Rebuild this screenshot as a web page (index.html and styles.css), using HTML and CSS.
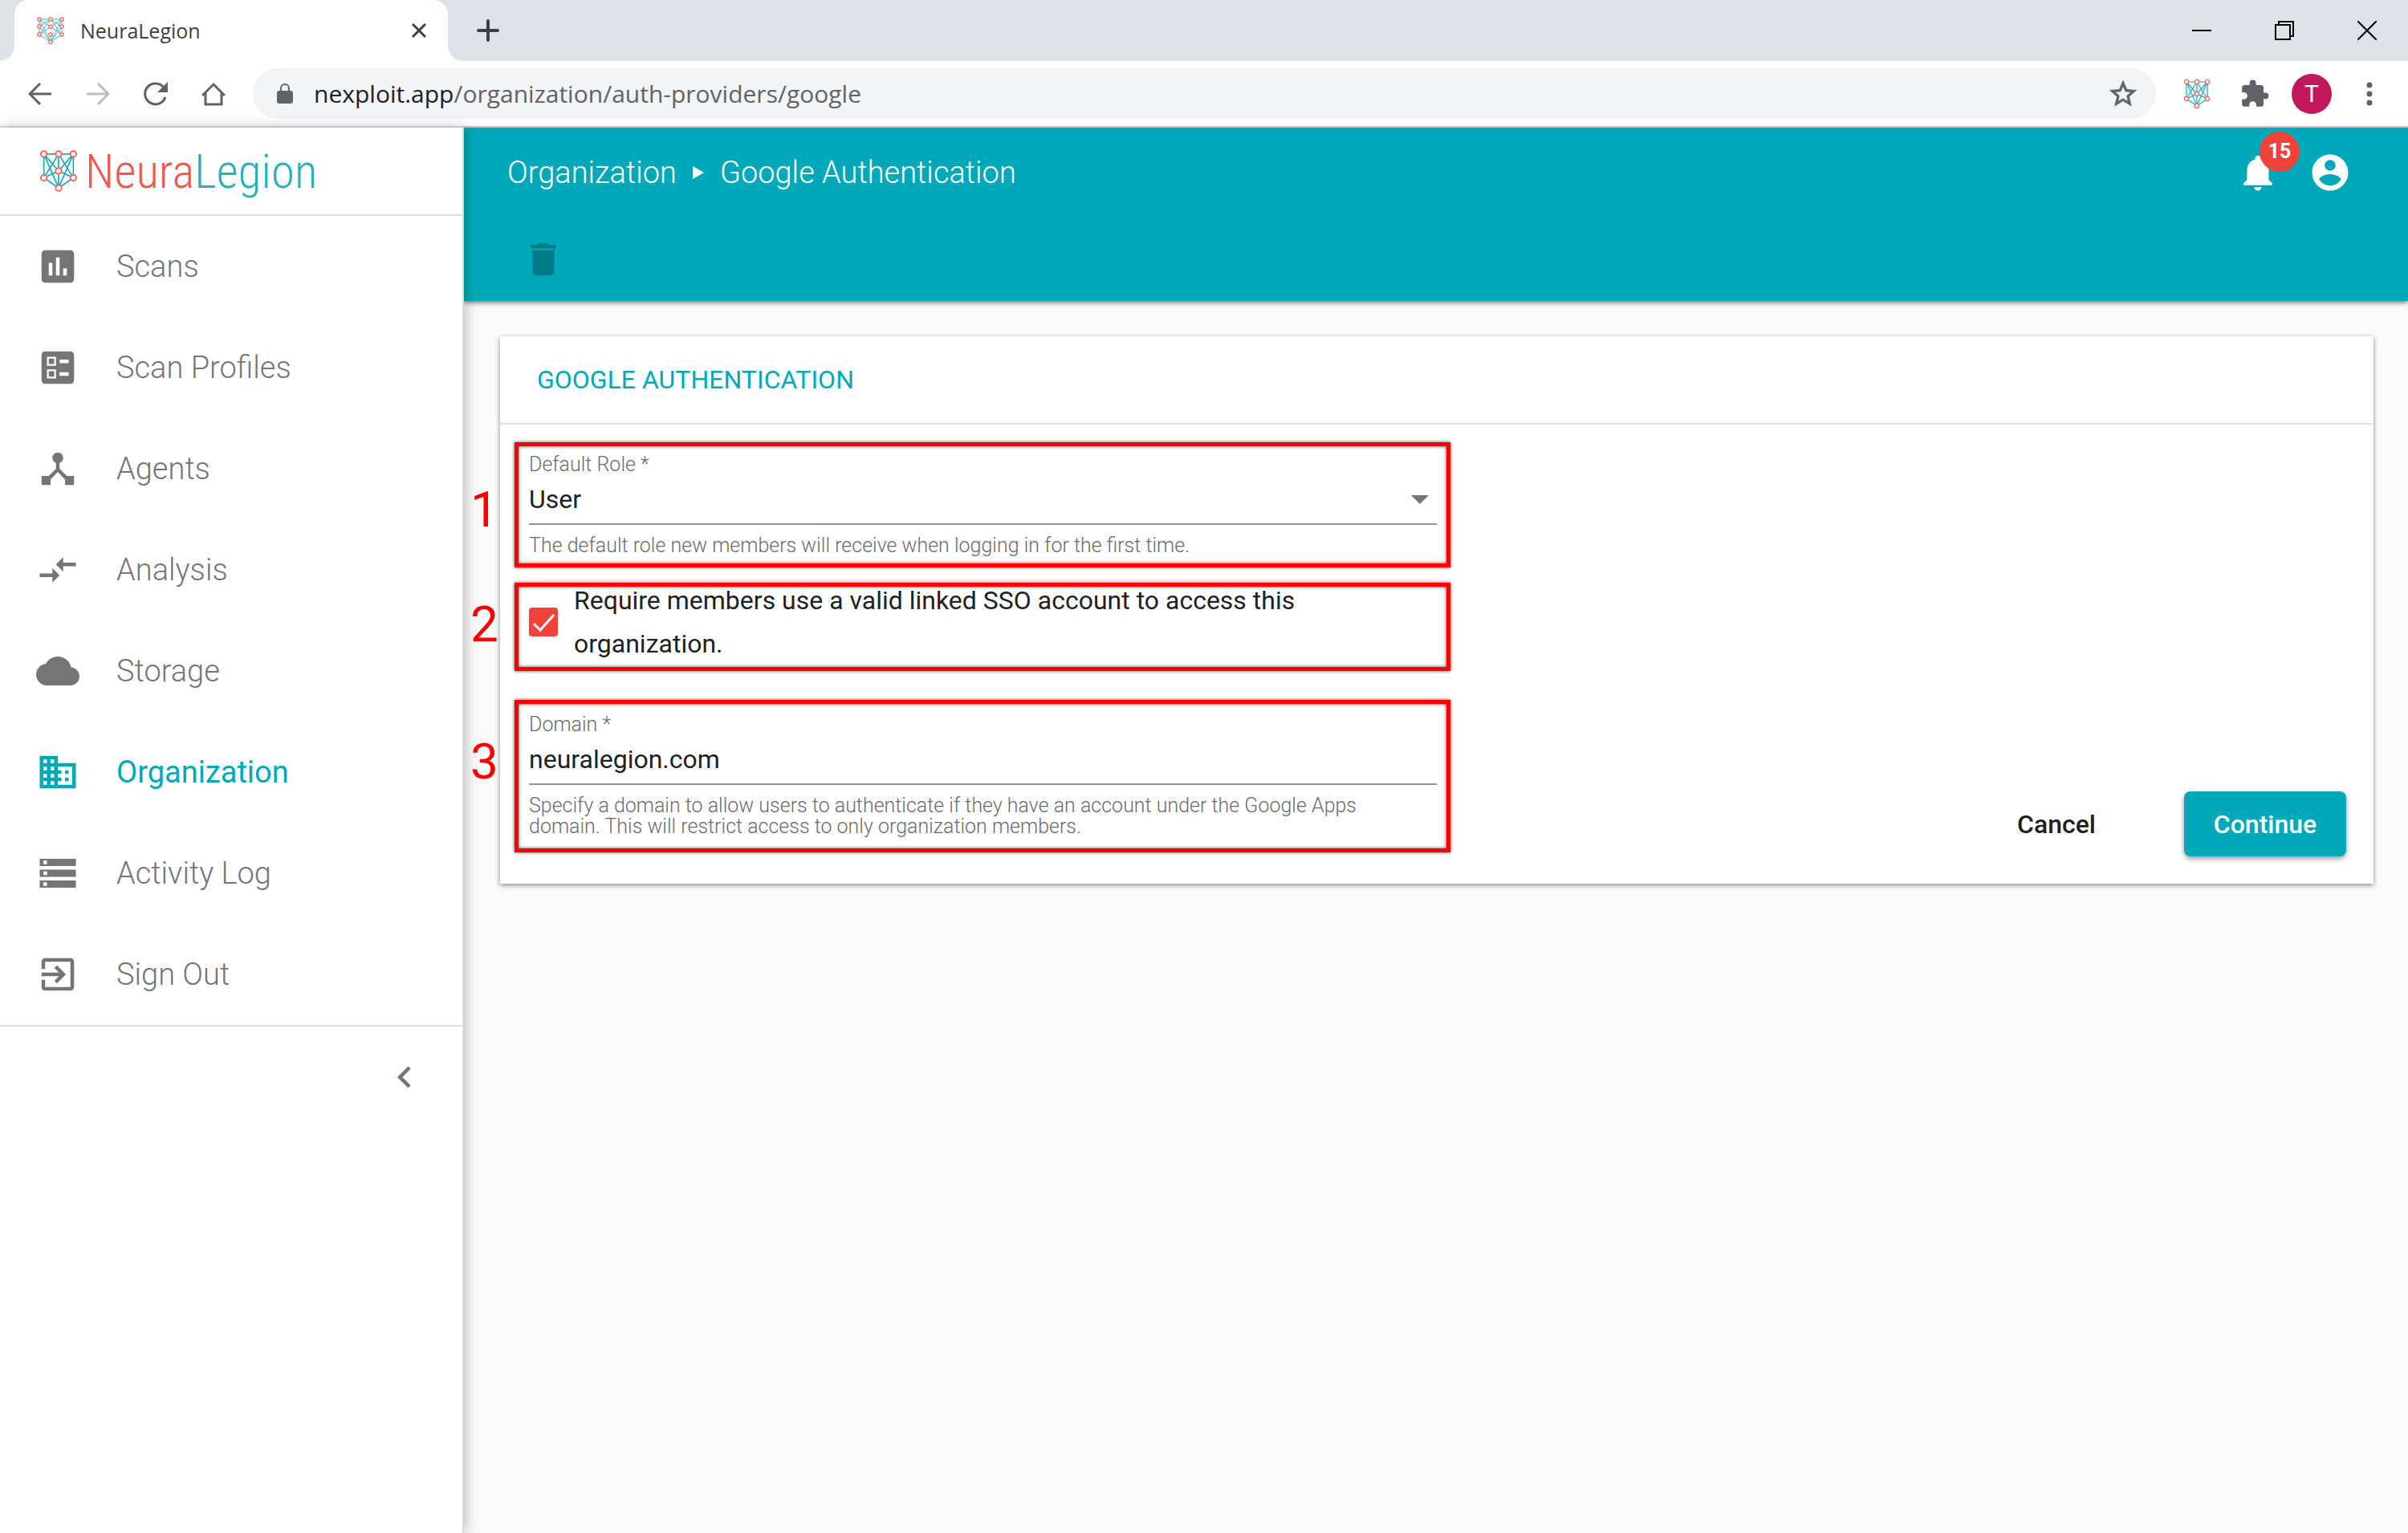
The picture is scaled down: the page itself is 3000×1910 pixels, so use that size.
FILE: index.html
```html
<!DOCTYPE html>
<html lang="en">
<head>
<meta charset="utf-8">
<title>NeuraLegion</title>
<link rel="stylesheet" href="styles.css">
</head>
<body>
<svg class="sprite" aria-hidden="true">
  <symbol id="net" viewBox="0 0 34 38">
    <path d="M4 4h26v21L17 34 4 25zM17 4v30M4 4l13 15L30 4M4 4l13 30L30 4M17 4L4 25l13-6 13 6L17 4" fill="none" stroke="#12adba" stroke-width="1.2"/>
    <g fill="#fff" stroke="#f2685e" stroke-width="1.4"><circle cx="4" cy="4" r="2.6"/><circle cx="17" cy="4" r="2.6"/><circle cx="30" cy="4" r="2.6"/><circle cx="17" cy="19" r="2.6"/><circle cx="4" cy="25" r="2.6"/><circle cx="30" cy="25" r="2.6"/><circle cx="17" cy="34" r="2.6"/></g>
  </symbol>
</svg>

<header class="browser">
  <div class="tabstrip">
    <div class="tab">
      <svg class="tab-icon" viewBox="0 0 34 34"><path d="M3 3h28v19L17 31 3 22zM17 22v9M3 3l28 19M31 3L3 22M3 12L17 3l14 9-14 19zM3 3l14 28L31 3M3 22L17 3l14 19" fill="none" stroke="#3cbcc6" stroke-width="1"/><g fill="#fff" stroke="#f2685e" stroke-width="1.3"><circle cx="3" cy="3" r="2.2"/><circle cx="17" cy="3" r="2.2"/><circle cx="31" cy="3" r="2.2"/><circle cx="3" cy="12" r="2.2"/><circle cx="17" cy="12" r="2.2"/><circle cx="31" cy="12" r="2.2"/><circle cx="3" cy="22" r="2.2"/><circle cx="17" cy="22" r="2.2"/><circle cx="31" cy="22" r="2.2"/><circle cx="17" cy="31" r="2.2"/></g></svg>
      <span class="tab-title">NeuraLegion</span>
      <button class="plain" aria-label="Close tab"><svg width="18" height="18" viewBox="0 0 18 18"><path d="M1 1l16 16M17 1L1 17" stroke="#3c4043" stroke-width="3"/></svg></button>
    </div>
    <button class="plain new-tab" aria-label="New tab"><svg width="28" height="28" viewBox="0 0 28 28"><path d="M14 2v24M2 14h24" stroke="#3c4043" stroke-width="4" stroke-linecap="round"/></svg></button>
    <div class="window-buttons">
      <button class="plain" aria-label="Minimize"><svg width="24" height="24" viewBox="0 0 24 24"><path d="M0 12h24" stroke="#000" stroke-width="2"/></svg></button>
      <button class="plain" aria-label="Restore"><svg width="24" height="24" viewBox="0 0 24 24"><path d="M1 5h18v18H1zM5 5V1h18v18h-4" fill="none" stroke="#000" stroke-width="2"/></svg></button>
      <button class="plain" aria-label="Close"><svg width="24" height="24" viewBox="0 0 24 24"><path d="M0 0l24 24M24 0L0 24" stroke="#000" stroke-width="2"/></svg></button>
    </div>
  </div>
  <div class="toolbar">
    <div class="nav-buttons">
      <button class="plain" aria-label="Back"><svg width="30" height="30" viewBox="0 0 30 30"><path d="M29 15H3M15 2L2 15l13 13" fill="none" stroke="#5f6368" stroke-width="3"/></svg></button>
      <button class="plain" aria-label="Forward"><svg width="30" height="30" viewBox="0 0 30 30"><path d="M1 15h26M15 2l13 13-13 13" fill="none" stroke="#babcbe" stroke-width="3"/></svg></button>
      <button class="plain" aria-label="Reload"><svg width="30" height="30" viewBox="0 0 30 30"><path d="M27 19A13 13 0 1 1 25 7" fill="none" stroke="#5f6368" stroke-width="3"/><path d="M30 0v13H17z" fill="#5f6368"/></svg></button>
      <button class="plain" aria-label="Home"><svg width="30" height="30" viewBox="0 0 30 30"><path d="M1 17L15 3l14 14M5 14v14h20V14" fill="none" stroke="#5f6368" stroke-width="3"/></svg></button>
    </div>
    <div class="address">
      <svg width="20" height="26" viewBox="0 0 20 26"><rect y="9" width="20" height="16" rx="3" fill="#5f6368"/><path d="M5 10V6a5 5 0 0 1 10 0v4" fill="none" stroke="#5f6368" stroke-width="2"/></svg>
      <span class="url"><b>nexploit.app</b>/organization/auth-providers/google</span>
      <button class="plain" aria-label="Bookmark"><svg width="40" height="40" viewBox="0 0 24 24"><path fill="#5f6368" stroke="#5f6368" stroke-width=".4" d="M22 9.240l-7.190-.62L12 2 9.190 8.630 2 9.240l5.460 4.730L5.820 21 12 17.270 18.180 21l-1.630-7.030L22 9.240zM12 15.400l-3.760 2.270 1-4.280-3.320-2.880 4.380-.38L12 6.100l1.710 4.040 4.380.38-3.320 2.880 1 4.280L12 15.400z"/></svg></button>
    </div>
    <div class="extensions">
      <button class="plain" aria-label="NeuraLegion extension"><svg width="34" height="38"><use href="#net"/></svg></button>
      <button class="plain" aria-label="Extensions"><svg width="38" height="38" viewBox="0 0 24 24"><path fill="#5f6368" d="M20.500 11H19V7c0-1.100-.9-2-2-2h-4V3.500a2.500 2.500 0 0 0-5 0V5H4c-1.100 0-2 .9-2 2v3.800h1.500a2.700 2.700 0 0 1 0 5.400H2V20c0 1.100.9 2 2 2h3.800v-1.500a2.700 2.700 0 0 1 5.400 0V22H17c1.100 0 2-.9 2-2v-4h1.500a2.500 2.500 0 0 0 0-5z"/></svg></button>
      <button class="plain avatar">T</button>
      <button class="plain" aria-label="Menu"><svg width="8" height="30" viewBox="0 0 8 30"><g fill="#5f6368"><circle cx="4" cy="4" r="3.500"/><circle cx="4" cy="15" r="3.500"/><circle cx="4" cy="26" r="3.500"/></g></svg></button>
    </div>
  </div>
</header>

<div class="app">
  <aside class="sidebar">
    <a class="logo" href="#"><svg width="48" height="54"><use href="#net"/></svg><span class="wordmark"><span class="neura">Neura</span>Legion</span></a>
    <nav class="menu">
      <a href="#"><svg viewBox="0 0 24 24"><path d="M19 3H5c-1.100 0-2 .9-2 2v14c0 1.100.9 2 2 2h14c1.100 0 2-.9 2-2V5c0-1.100-.9-2-2-2zM9 17H7v-7h2v7zm4 0h-2V7h2v10zm4 0h-2v-4h2v4z"/></svg>Scans</a>
      <a href="#"><svg viewBox="0 0 24 24"><path fill-rule="evenodd" d="M19 3H5a2 2 0 0 0-2 2v14c0 1.100.9 2 2 2h14a2 2 0 0 0 2-2V5a2 2 0 0 0-2-2zM6 6h5v5H6zm1 1v3h3V7zM6 13h5v5H6zm1 1v3h3v-3zM13 7.500h5v2h-5zM13 14.500h5v2h-5z"/></svg>Scan Profiles</a>
      <a href="#"><svg viewBox="0 0 24 24"><path d="M17 16l-4-4V8.820C14.160 8.400 15 7.300 15 6c0-1.660-1.340-3-3-3S9 4.340 9 6c0 1.300.84 2.400 2 2.820V12l-4 4H3v5h5v-3.050l4-4.200 4 4.200V21h5v-5h-4z"/></svg>Agents</a>
      <a href="#"><svg viewBox="0 0 24 24"><path d="M9.010 14H2v2h7.010v3L13 15l-3.990-4v3zm5.980-1v-3H22V8h-7.010V5L11 9l3.990 4z"/></svg>Analysis</a>
      <a href="#"><svg viewBox="0 0 24 24"><path d="M19.350 10.040A7.490 7.490 0 0 0 12 4C9.110 4 6.600 5.640 5.350 8.040A5.994 5.994 0 0 0 0 14c0 3.310 2.690 6 6 6h13c2.760 0 5-2.240 5-5 0-2.640-2.050-4.780-4.650-4.960z"/></svg>Storage</a>
      <a href="#" class="active" aria-current="page"><svg viewBox="0 0 24 24"><path d="M12 7V3H2v18h20V7H12zM6 19H4v-2h2v2zm0-4H4v-2h2v2zm0-4H4V9h2v2zm0-4H4V5h2v2zm4 12H8v-2h2v2zm0-4H8v-2h2v2zm0-4H8V9h2v2zm0-4H8V5h2v2zm10 12h-8v-2h2v-2h-2v-2h2v-2h-2V9h8v10zm-2-8h-2v2h2v-2zm0 4h-2v2h2v-2z"/></svg>Organization</a>
      <a href="#"><svg viewBox="0 0 24 24"><path d="M2 20h20v-4H2v4zm2-3h2v2H4v-2zM2 4v4h20V4H2zm4 3H4V5h2v2zm-4 7h20v-4H2v4zm2-3h2v2H4v-2z"/></svg>Activity Log</a>
      <a href="#"><svg viewBox="0 0 24 24"><path d="M10.090 15.590L11.500 17l5-5-5-5-1.410 1.410L12.670 11H3v2h9.670l-2.580 2.590zM19 3H5a2 2 0 0 0-2 2v4h2V5h14v14H5v-4H3v4a2 2 0 0 0 2 2h14c1.100 0 2-.9 2-2V5c0-1.100-.9-2-2-2z"/></svg>Sign Out</a>
    </nav>
    <button class="plain collapse" aria-label="Collapse menu"><svg class="icon" viewBox="0 0 24 24"><path d="M15.410 7.410L14 6l-6 6 6 6 1.410-1.410L10.830 12z"/></svg></button>
  </aside>

  <main class="content">
    <div class="topbar">
      <div class="topbar-row">
        <div class="crumbs"><a href="#">Organization</a><svg width="14" height="16" viewBox="0 0 14 16"><path d="M0 0l14 8L0 16z" fill="#fff"/></svg><span>Google Authentication</span></div>
        <div class="account">
          <button class="plain bell" aria-label="Notifications"><svg class="icon" viewBox="0 0 24 24"><path d="M12 22c1.100 0 2-.9 2-2h-4a2 2 0 0 0 2 2zm6-6v-5c0-3.070-1.640-5.640-4.500-6.320V4c0-.83-.67-1.500-1.500-1.500s-1.500.67-1.500 1.500v.68C7.630 5.360 6 7.920 6 11v5l-2 2v1h16v-1l-2-2z"/></svg><span class="badge">15</span></button>
          <button class="plain" aria-label="Account"><svg class="icon" viewBox="0 0 24 24"><path d="M12 2C6.480 2 2 6.480 2 12s4.480 10 10 10 10-4.480 10-10S17.520 2 12 2zm0 3c1.660 0 3 1.340 3 3s-1.340 3-3 3-3-1.340-3-3 1.340-3 3-3zm0 14.200a7.200 7.200 0 0 1-6-3.220c.03-1.990 4-3.080 6-3.080 1.990 0 5.970 1.090 6 3.080a7.200 7.200 0 0 1-6 3.220z"/></svg></button>
        </div>
      </div>
      <div class="topbar-row"><button class="plain trash" aria-label="Delete" disabled><svg class="icon" viewBox="0 0 24 24"><path d="M6 19c0 1.100.9 2 2 2h8c1.100 0 2-.9 2-2V7H6v12zM19 4h-3.500l-1-1h-5l-1 1H5v2h14V4z"/></svg></button></div>
    </div>

    <form class="card">
      <h1>GOOGLE AUTHENTICATION</h1>
      <div class="card-body">
        <div class="fields">
          <div class="field role">
            <span class="step">1</span>
            <label for="role">Default Role *</label>
            <div class="select"><select id="role"><option>User</option></select><svg width="22" height="11" viewBox="0 0 22 11"><path d="M0 0h22L11 11z" fill="#757575"/></svg></div>
            <p>The default role new members will receive when logging in for the first time.</p>
          </div>
          <div class="field check">
            <span class="step">2</span>
            <span class="box"><input type="checkbox" id="sso" checked><svg viewBox="0 0 36 36"><path d="M6 20l8 8L31 9" fill="none" stroke="#fff" stroke-width="3"/></svg></span>
            <label for="sso">Require members use a valid linked SSO account to access this organization.</label>
          </div>
          <div class="field domain">
            <span class="step">3</span>
            <label for="domain">Domain *</label>
            <input type="text" id="domain" value="neuralegion.com">
            <p>Specify a domain to allow users to authenticate if they have an account under the Google Apps domain. This will restrict access to only organization members.</p>
          </div>
        </div>
        <div class="actions">
          <button type="button" class="plain cancel">Cancel</button>
          <button type="button" class="plain continue">Continue</button>
        </div>
      </div>
    </form>
  </main>
</div>
</body>
</html>
```
FILE: styles.css
```css
* { box-sizing: border-box; }
body {
  margin: 0;
  min-height: 100vh;
  display: flex;
  flex-direction: column;
  background: #fafafa;
  color: #212121;
  font-family: Roboto, sans-serif;
  font-size: 32px;
}
svg { display: block; flex: none; }
a { color: inherit; text-decoration: none; }
.sprite { display: none; }
.plain { display: block; border: 0; padding: 0; background: none; font: inherit; color: inherit; }
.icon { width: 54px; height: 54px; fill: currentColor; }

/* Browser window */
.browser { font-family: "Open Sans", sans-serif; border-bottom: 2px solid #dadce0; background: #fff; }
.tabstrip { height: 76px; display: flex; align-items: center; background: #dee1e6; padding-left: 18px; }
.tab {
  position: relative;
  width: 540px;
  height: 76px;
  padding: 0 27px 0 28px;
  display: flex;
  align-items: center;
  gap: 20px;
  background: #fff;
  border-radius: 18px 18px 0 0;
}
.tab::before, .tab::after { content: ""; position: absolute; bottom: 0; width: 18px; height: 18px; }
.tab::before { right: 100%; background: radial-gradient(circle at 0 0, transparent 17px, #fff 18px); }
.tab::after { left: 100%; background: radial-gradient(circle at 100% 0, transparent 17px, #fff 18px); }
.tab-icon { width: 34px; height: 36px; }
.tab-title { flex: 1; font-size: 25px; color: #3c4043; }
.new-tab { margin-left: 36px; }
.window-buttons { margin-left: auto; height: 66px; padding-right: 39px; display: flex; align-items: center; gap: 79px; }
.toolbar { height: 81px; padding: 0 44px 0 35px; display: flex; align-items: center; gap: 34px; }
.nav-buttons { display: flex; gap: 42px; }
.address {
  flex: 1;
  height: 63px;
  padding: 0 21px 0 30px;
  display: flex;
  align-items: center;
  gap: 26px;
  border-radius: 32px;
  background: #f1f3f4;
}
.url { flex: 1; font-size: 30px; color: #5f6368; }
.url b { font-weight: 400; color: #202124; }
.extensions { display: flex; align-items: center; gap: 36px; }
.avatar { width: 50px; height: 50px; margin: 0 7px 0 -9px; border-radius: 50%; background: #c2185b; color: #fff; font-family: Roboto, sans-serif; font-size: 30px; }

/* Application shell */
.app { flex: 1; display: grid; grid-template-columns: 578px 1fr; }
.sidebar { position: relative; background: #fff; border-right: 2px solid #dcdcdc; box-shadow: 2px 0 16px rgba(0, 0, 0, .25); color: #757575; }
.logo { height: 110px; padding: 0 49px; display: flex; align-items: center; gap: 9px; border-bottom: 2px solid #e0e0e0; }
.wordmark { font-family: "Roboto Condensed", Roboto, sans-serif; font-size: 59px; font-weight: 300; color: #28b1bd; }
.neura { color: #f4574c; }
.menu { border-bottom: 2px solid #e0e0e0; }
.menu a { height: 126px; padding-left: 45px; display: flex; align-items: center; gap: 46px; font-size: 38px; font-weight: 300; }
.menu svg { width: 54px; height: 54px; fill: currentColor; }
.menu .active { color: #00a9b8; font-weight: 400; }
.collapse { margin: 36px 45px 0 auto; }

.topbar { height: 216px; padding: 4px 70px 0 54px; display: flex; flex-direction: column; gap: 4px; background: #00a9b9; color: #fff; box-shadow: 0 2px 6px rgba(0, 0, 0, .55); }
.topbar-row { height: 104px; display: flex; align-items: center; justify-content: space-between; }
.crumbs { display: flex; align-items: center; gap: 20px; font-size: 38px; font-weight: 300; }
.account { display: flex; gap: 36px; }
.bell { position: relative; }
.badge {
  position: absolute;
  left: 29px;
  top: -24px;
  width: 50px;
  height: 50px;
  border-radius: 50%;
  background: #f04238;
  font-size: 25px;
  font-weight: 700;
  line-height: 50px;
  text-align: center;
}
.trash { margin-left: 18px; color: #007b87; }

/* Provider form */
.card { margin: 44px 43px 0 45px; background: #fff; box-shadow: 0 2px 6px rgba(0, 0, 0, .45); }
.card h1 { margin: 0; height: 110px; padding: 0 46px; border-bottom: 2px solid #e0e0e0; font-size: 32px; font-weight: 400; line-height: 108px; color: #00a9b8; }
.card-body { padding: 22px 34px 34px 18px; display: flex; justify-content: space-between; align-items: flex-end; }
.fields { flex: 0 0 calc(50% + 25px); padding-bottom: 5px; }
.field {
  position: relative;
  border: 5px solid #f00;
  box-shadow: 0 0 4px rgba(0, 0, 0, .7), inset 0 0 4px rgba(0, 0, 0, .7);
}
.field > label { display: block; }
.field:not(.check) > label, .field p { font-size: 25px; font-weight: 300; line-height: 26px; color: #6b6b6b; }
.field p { margin: 13px 0 0; padding-right: 60px; }
.step { position: absolute; left: -60px; margin-top: -34px; font-size: 62px; line-height: 68px; color: #f00; }
.select { display: flex; align-items: center; border-bottom: 2px solid #949494; padding-right: 10px; }
.select select { flex: 1; appearance: none; border: 0; padding: 0; background: none; font: inherit; color: inherit; height: 60px; }
.field input[type="text"] { display: block; width: 100%; height: 62px; border: 0; border-bottom: 2px solid #949494; padding: 0; background: none; font: inherit; color: inherit; }
.role { padding: 10px 12px 9px 13px; }
.role .step { top: 79px; }
.check { margin: 19px 0 36px; padding: 0 12px 12px 13px; height: 110px; display: flex; align-items: center; gap: 20px; }
.check > label { width: 980px; line-height: 54px; }
.check .step { top: 47px; }
.domain { padding: 13px 12px 14px 13px; }
.domain .step { top: 72px; }
.box { display: grid; width: 36px; height: 36px; }
.box input { grid-area: 1 / 1; appearance: none; margin: 0; border-radius: 4px; background: #f04238; }
.box svg { grid-area: 1 / 1; pointer-events: none; }
.actions { display: flex; align-items: center; gap: 76px; font-weight: 500; }
.cancel { padding: 0 34px; height: 81px; }
.continue { width: 202px; height: 81px; border-radius: 8px; background: #00a9b9; color: #fff; box-shadow: 0 3px 6px rgba(0, 0, 0, .4); }
```
